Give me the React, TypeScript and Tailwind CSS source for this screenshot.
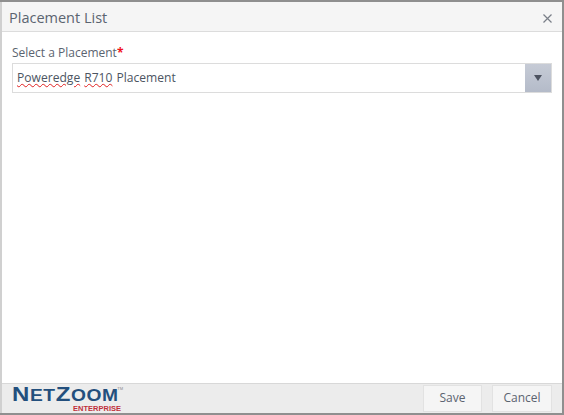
export default function App() {
  return (
    <div className="w-[564px] h-[415px] bg-[#8f8f8f] pt-[2px] pr-[2px] pb-[2px] font-['Open_Sans',sans-serif] overflow-hidden">
      <div className="h-full flex flex-col bg-white border-l-2 border-l-[#d0d0d0]">
        {/* Header */}
        <div className="h-[30px] shrink-0 flex items-center justify-between pt-[4px] pl-[7px] pr-[10px] bg-[#f5f5f5] border-b border-[#dcdcdc]">
          <span className="text-[14.5px] leading-none text-[#5b6470]">Placement List</span>
          <svg width="9" height="9" viewBox="0 0 9 9" className="text-[#7a7f88]">
            <path d="M.5.5l8 8M8.5.5l-8 8" stroke="currentColor" strokeWidth="1.2" />
          </svg>
        </div>

        {/* Body */}
        <div className="flex-1 pt-[12px] pl-[10px] pr-[10px]">
          <div className="text-[12px] leading-[17px] text-[#5b6470]">
            Select a Placement<span className="text-[#f01020] font-bold">*</span>
          </div>
          <div className="mt-[2px] h-[30px] flex border border-[#dcdcdc]">
            <div className="flex-1 flex items-center pt-[1px] pl-[4px] text-[12.1px] text-[#4c5562]">
              <span className="underline decoration-wavy decoration-[#e02020] decoration-1">Poweredge</span>
              <span className="ml-[4px] underline decoration-wavy decoration-[#e02020] decoration-1">R710</span>
              <span className="ml-[4px]">Placement</span>
            </div>
            <div className="w-[26px] flex items-center justify-center bg-gradient-to-b from-[#c6cbd6] to-[#b4bbc9]">
              <svg width="8" height="6" viewBox="0 0 8 6"><path d="M0 0h8L4 6z" fill="#4c5260" /></svg>
            </div>
          </div>
        </div>

        {/* Footer */}
        <div className="h-[30px] shrink-0 flex items-center justify-between pl-[10px] pr-[10px] bg-[#ececec] border-t border-[#d8d8d8]">
          <div className="relative w-[112px] h-[28px] font-['Liberation_Sans',sans-serif] font-bold">
            <div className="flex items-baseline h-[18px] origin-left scale-x-[1.2] text-[#234f7d] tracking-[0.5px] text-[16px] leading-[18px]">
              <span className="text-[20px]">N</span>ET<span className="text-[20px]">Z</span>OOM
            </div>
            <span className="absolute right-[1px] top-[2px] text-[4px] leading-[4px] font-normal text-[#888]">TM</span>
            <span className="absolute right-[3px] top-[20px] text-[7.5px] leading-[8px] text-[#c0303a]">ENTERPRISE</span>
          </div>
          <div className="flex gap-[10px] pb-[1px]">
            <button className="w-[59px] h-[27px] bg-[#f5f5f5] border border-[#e2e2e2] text-[12px] text-[#5b6470]">Save</button>
            <button className="w-[60px] h-[27px] bg-[#f5f5f5] border border-[#e2e2e2] text-[12px] text-[#5b6470]">Cancel</button>
          </div>
        </div>
      </div>
    </div>
  );
}
